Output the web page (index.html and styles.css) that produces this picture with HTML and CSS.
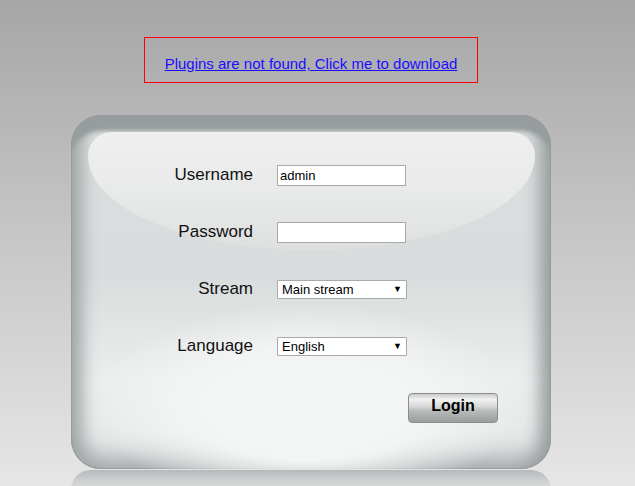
FILE: index.html
```html
<!DOCTYPE html>
<html>
<head>
<meta charset="utf-8">
<link rel="stylesheet" href="styles.css">
</head>
<body>
<div class="page">
  <div class="notice"><a href="#">Plugins are not found, Click me to download</a></div>
  <div class="panel-wrap">
    <div class="panel">
      <div class="glow"></div>
      <div class="gloss"></div>
      <form class="form">
        <label class="lbl">Username</label>
        <div class="field"><input class="txt" type="text" value="admin"></div>
        <label class="lbl">Password</label>
        <div class="field"><input class="txt" type="password"></div>
        <label class="lbl">Stream</label>
        <div class="field"><div class="sel"><span>Main stream</span><span class="arr">&#9660;</span></div></div>
        <label class="lbl">Language</label>
        <div class="field"><div class="sel"><span>English</span><span class="arr">&#9660;</span></div></div>
      </form>
      <div class="actions"><button class="login" type="button">Login</button></div>
    </div>
    <div class="reflect"></div>
  </div>
</div>
</body>
</html>
```
FILE: styles.css
```css
html, body {
  margin: 0;
  height: 100%;
}
body {
  background: linear-gradient(to bottom, #a6a6a6 0%, #c4c4c4 45%, #e6e6e6 100%);
  font-family: "Liberation Sans", Arial, sans-serif;
  overflow: hidden;
}
.page {
  padding-top: 37px;
}
.notice {
  margin-left: 144px;
  width: 332px;
  height: 44px;
  border: 1px solid #ff0000;
  text-align: center;
}
.notice a {
  display: inline-block;
  margin-top: 17px;
  font-size: 15px;
  color: #1a0dff;
  text-decoration: underline;
}
.panel-wrap {
  margin-top: 32px;
  margin-left: 71px;
  width: 480px;
}
.panel {
  position: relative;
  height: 354px;
  border-radius: 30px;
  background: linear-gradient(to bottom, #dcdfdf 0%, #d9dcdc 45%, #eceeee 75%, #e4e6e6 100%);
  box-shadow:
    inset 0 18px 4px -2px #979d9e,
    inset 0 0 0 1px #979d9e,
    inset 14px 0 18px -4px #a0a6a7,
    inset -14px 0 18px -4px #979d9e,
    inset 0 -16px 22px 0 #b7bcbd;
  overflow: hidden;
}
.gloss {
  position: absolute;
  left: 17px;
  right: 16px;
  top: 17px;
  height: 118px;
  border-radius: 24px 24px 50% 50% / 24px 24px 95px 95px;
  background: linear-gradient(to bottom, #efefef 0%, #e8e9e9 55%, #dee0e0 100%);
}
.glow {
  position: absolute;
  left: 20px;
  right: 30px;
  top: 190px;
  height: 200px;
  background: radial-gradient(closest-side, #f5f6f6 0%, #f3f4f4 55%, rgba(240,242,242,0) 100%);
}
.form {
  position: relative;
  display: grid;
  grid-template-columns: 182px 130px;
  column-gap: 24px;
  row-gap: 37px;
  padding-top: 50px;
  margin: 0;
  align-items: center;
}
.lbl {
  text-align: right;
  font-size: 17px;
  color: #111;
  height: 20px;
  line-height: 20px;
}
.field {
  height: 20px;
  display: flex;
  align-items: center;
}
.txt {
  box-sizing: border-box;
  width: 129px;
  height: 21px;
  margin: 0;
  border: 1px solid #a9a9a9;
  padding: 0 2px;
  font-family: "Liberation Sans", Arial, sans-serif;
  font-size: 13px;
  color: #000;
  background: #fff;
  outline: none;
}
.sel {
  box-sizing: border-box;
  width: 130px;
  height: 19px;
  border: 1px solid #a9a9a9;
  border-radius: 1px;
  background: #fff;
  display: flex;
  align-items: center;
  justify-content: space-between;
  padding: 0 4px 0 4px;
  font-size: 13px;
  color: #000;
}
.arr {
  font-size: 9px;
  margin-top: -1px;
}
.actions {
  position: relative;
  display: flex;
  justify-content: flex-end;
  padding-right: 53px;
  margin-top: 37px;
}
.login {
  width: 90px;
  height: 30px;
  border: 1px solid #8a8e8f;
  border-radius: 4px;
  background: linear-gradient(to bottom, #c9cbcb 0%, #f2f2f2 20%, #d6d7d7 45%, #b9bbbb 60%, #9a9d9e 100%);
  font-family: "Liberation Sans", Arial, sans-serif;
  font-weight: bold;
  font-size: 16px;
  color: #000;
  padding: 0 0 4px 0;
}
.reflect {
  height: 20px;
  margin-top: 1px;
  border-radius: 30px 30px 0 0;
  background: linear-gradient(to bottom, #b5b9b9 0%, #c8cbcb 40%, #dddfdf 100%);
}
```
